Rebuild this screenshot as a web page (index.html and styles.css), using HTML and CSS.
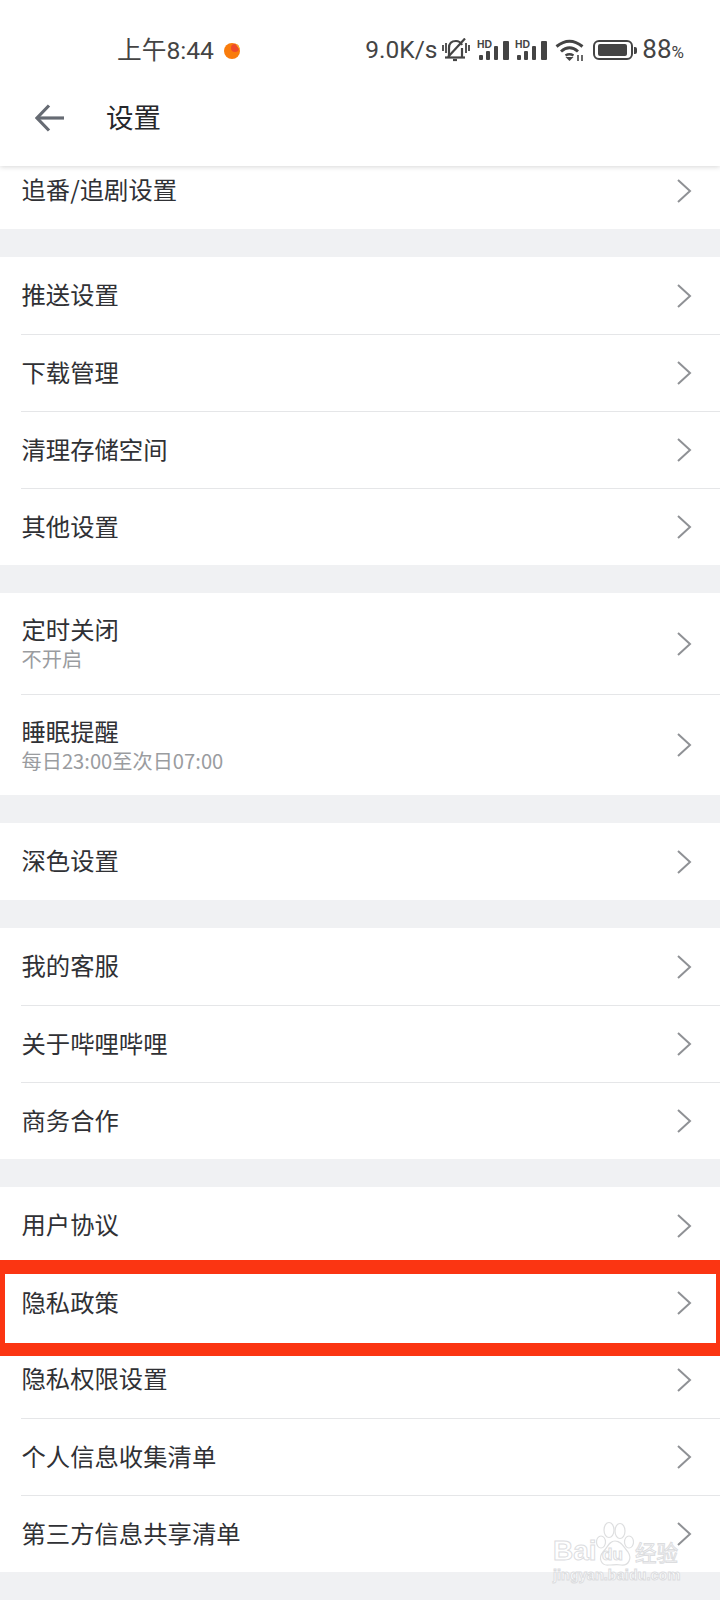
FILE: index.html
```html
<!DOCTYPE html>
<html lang="zh">
<head>
<meta charset="utf-8">
<title>设置</title>
<link rel="stylesheet" href="styles.css">
</head>
<body>
<svg class="defs" width="0" height="0"><defs>
<symbol id="chev" viewBox="0 0 16 26"><path d="M2 2 L14 13 L2 24" fill="none" stroke="currentColor" stroke-width="2"/></symbol>
<symbol id="sig" viewBox="0 0 32 21">
<rect x="2" y="15" width="4" height="5" rx="1"/><rect x="9" y="11" width="4" height="9" rx="1"/><rect x="17" y="6" width="4" height="14" rx="1"/><rect x="26" y="1" width="6" height="19" rx="1"/>
<text x="0" y="8" class="hd">HD</text>
</symbol>
</defs></svg>
<header class="top">
  <div class="status">
    <div class="status-left">
      <span class="time">上午8:44</span>
      <svg class="dot" width="18" height="18" viewBox="0 0 18 18"><circle cx="9" cy="9" r="8" fill="#f97c0c"/><circle cx="12" cy="6" r="4" fill="#ee4a2c"/><path d="M12 1.2 A8 8 0 0 1 17 9 L15.5 6 Z" fill="#fbb32a"/></svg>
    </div>
    <div class="status-right">
      <span class="speed">9.0K/s</span>
      <svg class="bell" width="28" height="24" viewBox="0 0 28 24" fill="none" stroke="#444" stroke-width="2.2"><path d="M7 19 V10 Q7 3 14 3 Q18 3 20 7"/><path d="M20 10 V19"/><path d="M3 19.5h20"/><path d="M11 22h4"/><path d="M23 0.5 L6 19"/><path d="M1 7v6M4 5v10M24 5v10M27 7v6" stroke-width="1.8"/></svg>
      <svg class="signal" width="32" height="21"><use href="#sig"/></svg>
      <svg class="signal second" width="32" height="21"><use href="#sig"/></svg>
      <svg class="wifi" width="30" height="22" viewBox="0 0 30 22" fill="none" stroke="#444" stroke-width="3"><path d="M1.5 7.5 Q14.5 -3 27.5 7.5"/><path d="M6 12.5 Q14.5 5 23 12.5"/><path d="M10.5 16.5 Q14.5 14 18.5 16.5" stroke-width="2.4"/><path d="M10.5 18h8l-4 4z" fill="#444" stroke="none"/><path d="M23 16v6M27 16v6" stroke-width="1.6"/></svg>
      <div class="battery-wrap"><div class="battery"><div class="battery-fill"></div></div><div class="nub"></div></div>
      <span class="pct">88<small>%</small></span>
    </div>
  </div>
  <div class="nav">
    <svg class="back" width="30" height="28" viewBox="0 0 30 28" fill="none" stroke="#666b73" stroke-width="3.2"><path d="M14 1.5 L2 14 L14 26.5"/><path d="M2 14 H29"/></svg>
    <h1 class="title">设置</h1>
  </div>
</header>
<main class="list">
  <section class="group first">
    <div class="row"><span class="label">追番/追剧设置</span><svg class="chev"><use href="#chev"/></svg></div>
  </section>
  <section class="group">
    <div class="row"><span class="label">推送设置</span><svg class="chev"><use href="#chev"/></svg></div>
    <div class="row"><span class="label">下载管理</span><svg class="chev"><use href="#chev"/></svg></div>
    <div class="row"><span class="label">清理存储空间</span><svg class="chev"><use href="#chev"/></svg></div>
    <div class="row"><span class="label">其他设置</span><svg class="chev"><use href="#chev"/></svg></div>
  </section>
  <section class="group">
    <div class="row tall"><div class="stack"><span class="label">定时关闭</span><span class="sub">不开启</span></div><svg class="chev"><use href="#chev"/></svg></div>
    <div class="row tall"><div class="stack"><span class="label">睡眠提醒</span><span class="sub">每日23:00至次日07:00</span></div><svg class="chev"><use href="#chev"/></svg></div>
  </section>
  <section class="group">
    <div class="row"><span class="label">深色设置</span><svg class="chev"><use href="#chev"/></svg></div>
  </section>
  <section class="group">
    <div class="row"><span class="label">我的客服</span><svg class="chev"><use href="#chev"/></svg></div>
    <div class="row"><span class="label">关于哔哩哔哩</span><svg class="chev"><use href="#chev"/></svg></div>
    <div class="row"><span class="label">商务合作</span><svg class="chev"><use href="#chev"/></svg></div>
  </section>
  <section class="group">
    <div class="row"><span class="label">用户协议</span><svg class="chev"><use href="#chev"/></svg></div>
    <div class="row marked"><span class="label">隐私政策</span><svg class="chev"><use href="#chev"/></svg><div class="mark"></div></div>
    <div class="row"><span class="label">隐私权限设置</span><svg class="chev"><use href="#chev"/></svg></div>
    <div class="row"><span class="label">个人信息收集清单</span><svg class="chev"><use href="#chev"/></svg></div>
    <div class="row"><span class="label">第三方信息共享清单</span><svg class="chev"><use href="#chev"/></svg></div>
  </section>
</main>
<div class="watermark">
  <svg class="paw" width="38" height="46" viewBox="0 0 38 46" fill="#fff" stroke="#dedfe0" stroke-width="1.2"><ellipse cx="13" cy="9" rx="5" ry="7.5"/><ellipse cx="24" cy="10" rx="5" ry="7.5"/><ellipse cx="5" cy="21" rx="4.5" ry="6"/><ellipse cx="33" cy="21" rx="4.5" ry="6"/><path d="M19 20c-6 0-7 6-12 11-5 6-2 14 6 13 4 0 8-1 12 0 8 1 11-7 7-13-4-4-6-11-13-11z"/></svg>
  <span class="wm-bai">Bai</span>
  <span class="wm-du">du</span>
  <span class="wm-cn">经验</span>
  <span class="wm-url">jingyan.baidu.com</span>
</div>
</body>
</html>
```
FILE: styles.css
```css
* { box-sizing: border-box; }
html, body { margin: 0; padding: 0; }
body {
  width: 720px;
  height: 1600px;
  overflow: hidden;
  position: relative;
  background: #f0f1f3;
  font-family: "Noto Sans CJK SC", "Noto Sans", sans-serif;
  color: #303135;
}
.defs { position: absolute; }
.hd { font: 700 10.4px "Liberation Sans", sans-serif; }

.top {
  position: relative;
  z-index: 2;
  height: 166px;
  background: #fff;
  box-shadow: 0 1px 5px rgba(0, 0, 0, .16);
}
.status {
  height: 92px;
  padding: 9px 36px 0 117px;
  display: flex;
  justify-content: space-between;
  align-items: center;
  color: #444;
}
.status-left { display: flex; align-items: center; gap: 9px; }
.time { font-size: 24.7px; line-height: 30px; font-family: "Roboto", "Noto Sans CJK SC", sans-serif; }
.status-right { display: flex; align-items: center; margin-top: -1px; }
.speed { font: 24.5px/30px "Roboto", sans-serif; width: 77px; }
.bell { margin-right: 7px; }
.signal { fill: #444; margin-right: 6px; }
.signal.second { margin-right: 8px; }
.wifi { margin-right: 8px; }
.battery-wrap { display: flex; align-items: center; margin-right: 5px; }
.battery {
  width: 40px;
  height: 20px;
  border: 2px solid #444;
  border-radius: 6px;
  padding: 2px 3px;
}
.battery-fill { width: 29px; height: 100%; background: #444; border-radius: 2px; }
.nub { width: 3px; height: 7px; margin-left: 1px; background: #444; border-radius: 0 2px 2px 0; }
.pct { font: 26px/30px "Roboto", sans-serif; }
.pct small { font-size: 17px; }

.nav {
  height: 74px;
  display: flex;
  align-items: center;
  padding: 0 0 24px 35px;
}
.back { margin: 2px 41px 0 0; }
.title { margin: 0 0 2px; font-size: 27.5px; line-height: 36px; font-weight: 400; color: #26272b; }

.list { display: flex; flex-direction: column; gap: 28px; margin-top: -14px; }
.group { background: #fff; }
.row {
  position: relative;
  height: 77px;
  margin-left: 21px;
  padding-right: 28px;
  display: flex;
  align-items: center;
  justify-content: space-between;
}
.row + .row { border-top: 1px solid #e5e6e8; }
.row.marked + .row { border-top: 0; }
.row.tall { height: 101px; }
.label { font-size: 24.35px; line-height: 32px; margin: 0 0 3px .5px; }
.stack { display: flex; flex-direction: column; margin-top: -2px; }
.stack .label { margin-bottom: 0; }
.sub { font-size: 20.2px; line-height: 27px; color: #9a9c9f; margin-left: .5px; }
.chev { width: 16px; height: 26px; color: #8f9195; flex: none; }

.mark {
  position: absolute;
  z-index: 1;
  top: -5px;
  left: -21px;
  right: 0;
  height: 96px;
  border: solid #fb3512;
  border-width: 14px 4px 13px 5px;
}

.watermark {
  position: absolute;
  z-index: 3;
  left: 553px;
  top: 1520px;
  width: 130px;
  height: 68px;
  color: #fff;
  -webkit-text-stroke: 1px #dcdddf;
}
.watermark span { position: absolute; white-space: nowrap; }
.paw { position: absolute; left: 43px; top: 1px; }
.wm-bai { left: 0; top: 11px; font: 700 28px/40px "Liberation Sans", sans-serif; }
.wm-du { left: 49px; top: 25px; font: 700 17px/20px "Liberation Sans", sans-serif; }
.wm-cn { left: 82px; top: 19px; font-size: 21.5px; line-height: 26px; }
.wm-url { left: 0; top: 44px; font: 700 14.5px/22px "Liberation Sans", sans-serif; }
```
